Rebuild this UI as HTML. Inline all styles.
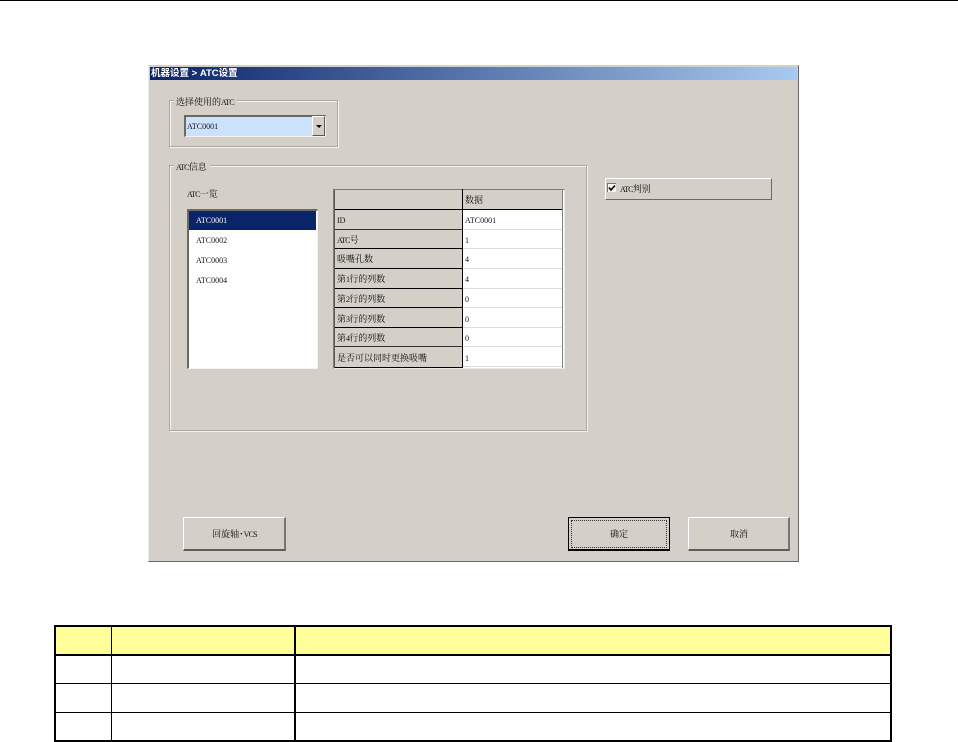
<!DOCTYPE html>
<html lang="zh"><head><meta charset="utf-8"><title>ATC设置</title>
<style>
html,body{margin:0;padding:0;background:#fff}
#p{position:relative;width:958px;height:742px;overflow:hidden;background:#fff;font-family:"Liberation Serif","Noto Serif CJK SC",serif;font-size:8px;color:#111}
#p div{position:absolute;box-sizing:border-box}
.t{white-space:nowrap;line-height:12px;height:12px;filter:blur(.25px)}
.z{font-size:9px}
.z span{font-size:8px;letter-spacing:-.8px}
.grp{border:1px solid #a9a8a3;box-shadow:1px 1px 0 #f4f3ef,inset 1px 1px 0 #f4f3ef}
.lg{background:#d4d0c8;padding:0}
.btn{background:#d4d0c8;border-top:1px solid #fff;border-left:1px solid #fff;border-right:2px solid #77756f;border-bottom:2px solid #5e5c58}
.c{text-align:center}
.cell{background:#d4d0c8}
.k{background:#000}
</style></head><body><div id="p">
<div class="k" style="left:0;top:0;width:958px;height:1px"></div>

<!-- window -->
<div style="left:148px;top:65px;width:651px;height:497px;background:#d4d0c8;border-top:1px solid #d4d0c8;border-left:1px solid #eeece8;border-right:1px solid #666;border-bottom:1px solid #666"></div>
<div style="left:150px;top:67px;width:647px;height:13px;background:linear-gradient(90deg,#0a246a,#a6caf0)"></div>
<div class="t" style="left:151px;top:67px;color:#fff;font-family:'Liberation Sans','Noto Sans CJK SC',sans-serif;font-size:9.5px;font-weight:bold;line-height:13px">机器设置 &gt; ATC设置</div>

<!-- group 1 -->
<div class="grp" style="left:169px;top:100px;width:169px;height:47px"></div>
<div class="lg" style="left:174px;top:98px;width:63px;height:6px"></div>
<div class="t z" style="left:176px;top:96px">选择使用的<span>ATC</span></div>
<div style="left:184px;top:115px;width:142px;height:22px;background:#fff;border-top:2px solid #6a6965;border-left:2px solid #6a6965;border-right:1px solid #f4f3ef;border-bottom:1px solid #f4f3ef"></div>
<div style="left:186px;top:117px;width:126px;height:19px;background:#cce1fb"></div>
<div class="t" style="left:187px;top:121px">ATC0001</div>
<div class="btn" style="left:312px;top:116px;width:13px;height:20px;border-right:1px solid #555;border-bottom:1px solid #555"></div>
<div style="left:316px;top:125px;width:0;height:0;border-left:3px solid transparent;border-right:3px solid transparent;border-top:3px solid #000"></div>

<!-- group 2 -->
<div class="grp" style="left:169px;top:165px;width:418px;height:266px"></div>
<div class="lg" style="left:174px;top:163px;width:36px;height:6px"></div>
<div class="t z" style="left:176px;top:161px"><span>ATC</span>信息</div>
<div class="t z" style="left:187px;top:188px"><span>ATC</span>一览</div>

<!-- list -->
<div style="left:187px;top:209px;width:131px;height:160px;background:#fff;border-top:2px solid #6a6965;border-left:2px solid #6a6965;border-right:1px solid #f4f3ef;border-bottom:1px solid #f4f3ef"></div>
<div style="left:189px;top:211px;width:127px;height:19px;background:#0a246a"></div>
<div class="t" style="left:196px;top:215px;color:#fff">ATC0001</div>
<div class="t" style="left:196px;top:235px">ATC0002</div>
<div class="t" style="left:196px;top:255px">ATC0003</div>
<div class="t" style="left:196px;top:275px">ATC0004</div>

<!-- grid -->
<div style="left:333px;top:189px;width:232px;height:180px;background:#fff;border-top:1px solid #7c7b77;border-left:1px solid #7c7b77;border-right:1px solid #e9e8e4;border-bottom:1px solid #e9e8e4"></div>
<div class="cell" style="left:335px;top:190px;width:227px;height:19px"></div>
<div class="k" style="left:335px;top:209px;width:228px;height:1px"></div>
<div class="cell" style="left:335px;top:210px;width:127px;height:158px"></div>
<div style="left:562px;top:190px;width:1px;height:178px;background:#807f7b"></div>
<div style="left:334px;top:190px;width:1px;height:178px;background:#5a5a57"></div>
<div class="k" style="left:462px;top:189px;width:1px;height:179px"></div>

<div class="k" style="left:335px;top:229px;width:127px;height:1px;opacity:.75"></div>
<div class="k" style="left:335px;top:248px;width:127px;height:1px"></div>
<div class="k" style="left:335px;top:268px;width:127px;height:1px"></div>
<div class="k" style="left:335px;top:288px;width:127px;height:1px"></div>
<div class="k" style="left:335px;top:307px;width:127px;height:1px"></div>
<div class="k" style="left:335px;top:327px;width:127px;height:1px"></div>
<div class="k" style="left:335px;top:346px;width:127px;height:1px;opacity:.75"></div>
<div class="k" style="left:335px;top:367px;width:127px;height:1px"></div>

<div style="left:463px;top:229px;width:99px;height:1px;background:#ddd"></div>
<div style="left:463px;top:248px;width:99px;height:1px;background:#ddd"></div>
<div style="left:463px;top:268px;width:99px;height:1px;background:#ddd"></div>
<div style="left:463px;top:288px;width:99px;height:1px;background:#ddd"></div>
<div style="left:463px;top:307px;width:99px;height:1px;background:#ddd"></div>
<div style="left:463px;top:327px;width:99px;height:1px;background:#ddd"></div>
<div style="left:463px;top:346px;width:99px;height:1px;background:#ddd"></div>
<div style="left:463px;top:366px;width:99px;height:1px;background:#ddd"></div>

<div class="t z" style="left:465px;top:194px">数据</div>
<div class="t" style="left:337px;top:215px">ID</div>
<div class="t" style="left:465px;top:215px">ATC0001</div>
<div class="t z" style="left:337px;top:234px"><span>ATC</span>号</div>
<div class="t" style="left:465px;top:235px">1</div>
<div class="t z" style="left:337px;top:253px">吸嘴孔数</div>
<div class="t" style="left:465px;top:254px">4</div>
<div class="t z" style="left:337px;top:273px">第<span>1</span>行的列数</div>
<div class="t" style="left:465px;top:274px">4</div>
<div class="t z" style="left:337px;top:293px">第<span>2</span>行的列数</div>
<div class="t" style="left:465px;top:294px">0</div>
<div class="t z" style="left:337px;top:313px">第<span>3</span>行的列数</div>
<div class="t" style="left:465px;top:314px">0</div>
<div class="t z" style="left:337px;top:332px">第<span>4</span>行的列数</div>
<div class="t" style="left:465px;top:333px">0</div>
<div class="t z" style="left:337px;top:352px">是否可以同时更换吸嘴</div>
<div class="t" style="left:465px;top:353px">1</div>

<!-- checkbox button -->
<div style="left:605px;top:178px;width:167px;height:22px;background:#d4d0c8;border-top:1px solid #fff;border-left:1px solid #fff;border-right:1px solid #6a6965;border-bottom:1px solid #6a6965"></div>
<div style="left:607px;top:183px;width:9px;height:9px;background:#f4f3ef;border-top:1px solid #77756f;border-left:1px solid #77756f"></div>
<svg style="position:absolute;left:607px;top:183px" width="10" height="10" viewBox="0 0 10 10"><path d="M2 4.5L4 7L8 2.5" fill="none" stroke="#000" stroke-width="1.6"/></svg>
<div class="t z" style="left:620px;top:183px"><span>ATC</span>判别</div>

<!-- buttons -->
<div class="btn" style="left:183px;top:517px;width:103px;height:34px"></div>
<div class="t c z" style="left:183px;top:528px;width:103px">回旋轴･<span>VCS</span></div>

<div style="left:568px;top:517px;width:102px;height:34px;background:#d4d0c8;border:1px solid #000;border-bottom-width:2px"></div>
<div style="left:571px;top:520px;width:96px;height:28px;border:1px dotted #333"></div>
<div class="t c z" style="left:568px;top:528px;width:102px">确定</div>

<div class="btn" style="left:688px;top:517px;width:102px;height:34px"></div>
<div class="t c z" style="left:688px;top:528px;width:102px">取消</div>

<!-- bottom table -->
<div style="left:54px;top:625px;width:838px;height:117px;border:2px solid #000;background:#fff"></div>
<div style="left:56px;top:627px;width:834px;height:27px;background:#ffff99"></div>
<div class="k" style="left:56px;top:654px;width:834px;height:2px"></div>
<div class="k" style="left:56px;top:683px;width:834px;height:1px"></div>
<div class="k" style="left:56px;top:712px;width:834px;height:1px"></div>
<div class="k" style="left:111px;top:627px;width:1px;height:113px"></div>
<div class="k" style="left:294px;top:627px;width:2px;height:113px"></div>
</div></body></html>
